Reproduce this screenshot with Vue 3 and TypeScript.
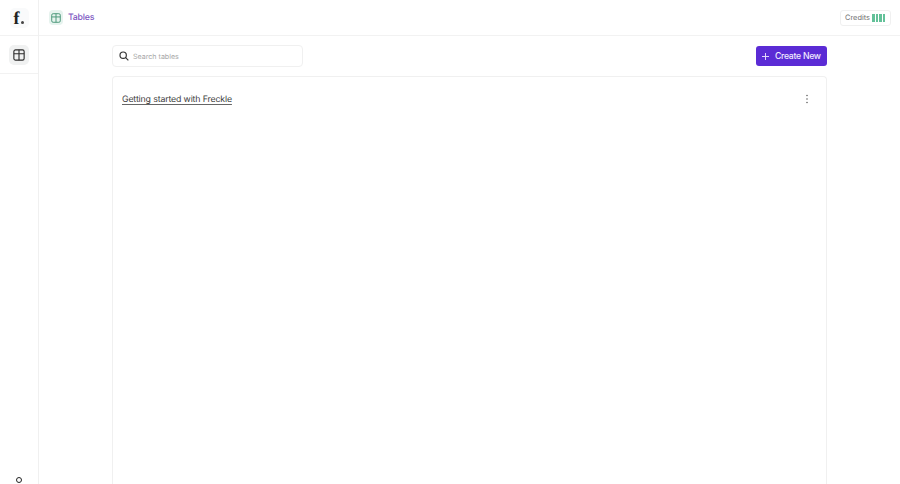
<script setup lang="ts">
const credits: number[] = [1, 2, 3, 4]
</script>

<template>
  <div class="app">
    <aside class="sidebar">
      <div class="brand"><div class="logo"><span class="f">f</span><span class="dot"></span></div></div>
      <nav class="nav">
        <div class="nav-btn">
          <svg width="12" height="12" viewBox="0 0 14 14" fill="none" stroke="#2b2b2b" stroke-width="1.3">
            <rect x="1" y="1" width="12" height="12" rx="2" />
            <path d="M1 5.5h12M7 1v12" />
          </svg>
        </div>
      </nav>
      <div class="foot"><span class="ring"></span></div>
    </aside>
    <div class="main">
      <header class="top">
        <div class="title">
          <div class="title-icon">
            <svg width="10" height="10" viewBox="0 0 14 14" fill="none" stroke="#4f9a7c" stroke-width="1.4">
              <rect x="1" y="1" width="12" height="12" rx="2" />
              <path d="M1 5.5h12M7 1v12" />
            </svg>
          </div>
          <span class="title-text">Tables</span>
        </div>
        <div class="credits">
          <span>Credits</span>
          <span class="bars"><i v-for="c in credits" :key="c"></i></span>
        </div>
      </header>
      <section class="content">
        <div class="tools">
          <label class="search">
            <svg width="10" height="10" viewBox="0 0 12 12" fill="none" stroke="#333" stroke-width="1.4">
              <circle cx="5" cy="5" r="3.8" />
              <path d="M8 8l3.2 3.2" />
            </svg>
            <span class="placeholder">Search tables</span>
          </label>
          <button class="create">
            <svg width="7" height="7" viewBox="0 0 8 8" stroke="#e6dcfa" stroke-width="1.1"><path d="M4 0v8M0 4h8" /></svg>
            <span>Create New</span>
          </button>
        </div>
        <div class="card">
          <div class="row">
            <a class="row-link">Getting started with Freckle</a>
            <svg class="more" width="4" height="10" viewBox="0 0 4 10" fill="#555">
              <circle cx="2" cy="1.4" r="0.75" /><circle cx="2" cy="5" r="0.75" /><circle cx="2" cy="8.6" r="0.75" />
            </svg>
          </div>
        </div>
      </section>
    </div>
  </div>
</template>

<style>
html, body { margin: 0; height: 100%; overflow: hidden; background: #fff; }
</style>

<style scoped>
.app { display: flex; width: 900px; height: 484px; overflow: hidden; font-family: Inter, "Liberation Sans", sans-serif; background: #fff; text-rendering: geometricPrecision; }
.sidebar { width: 38px; flex: none; border-right: 1px solid #f0f0f0; display: flex; flex-direction: column; }
.brand { height: 36px; display: flex; align-items: center; justify-content: center; box-sizing: border-box; border-bottom: 1px solid #f2f2f2; }
.logo { width: 19px; height: 20px; border-radius: 5px; background: #f9fafb; display: flex; align-items: flex-end; justify-content: center; }
.f { font-family: "Liberation Serif", serif; font-weight: 700; font-size: 18px; line-height: 20px; color: #222; margin-left: -1px; }
.dot { width: 3px; height: 3px; border-radius: 50%; background: #444; margin: 0 0 4px 1px; }
.nav { height: 38px; box-sizing: border-box; border-bottom: 1px solid #f2f2f2; display: flex; justify-content: center; padding-top: 9px; }
.nav-btn { width: 20px; height: 20px; border-radius: 5px; background: #f0f1f1; display: flex; align-items: center; justify-content: center; }
.foot { margin-top: auto; height: 7px; display: flex; justify-content: center; }
.ring { width: 6px; height: 6px; box-sizing: border-box; border: 1.5px solid #222; border-radius: 50%; }
.main { flex: 1; min-width: 0; display: flex; flex-direction: column; }
.top { height: 36px; flex: none; box-sizing: border-box; border-bottom: 1px solid #f2f2f2; display: flex; align-items: center; justify-content: space-between; padding: 0 9px 0 10px; }
.title { display: flex; align-items: center; gap: 5px; }
.title-icon { width: 14px; height: 15px; border-radius: 4px; background: #e6f3ee; display: flex; align-items: center; justify-content: center; }
.title-text { font-size: 8.8px; letter-spacing: -0.25px; font-weight: 500; color: #7e57c2; }
.credits { display: flex; align-items: center; gap: 2px; height: 14px; padding: 0 5px 0 4px; border: 1px solid #f0f0f0; border-radius: 3px; font-size: 7.4px; color: #707070; }
.bars { display: flex; gap: 1px; }
.bars i { width: 2.5px; height: 8px; background: #63c199; display: block; }
.content { flex: 1; min-height: 0; display: flex; flex-direction: column; gap: 9px; padding: 9px 73px 0 73px; }
.tools { display: flex; align-items: center; justify-content: space-between; }
.search { width: 191px; height: 22px; box-sizing: border-box; border: 1px solid #f0f0f0; border-radius: 4px; display: flex; align-items: center; gap: 4px; padding-left: 6px; }
.placeholder { font-size: 7.1px; color: #a8a8a8; }
.create { width: 71px; height: 20px; box-sizing: border-box; border: 0; border-radius: 3px; background: #5b2bd5; color: #f1ebff; display: flex; align-items: center; gap: 6px; padding: 0 0 0 6px; white-space: nowrap; font: 500 8.7px Inter, "Liberation Sans", sans-serif; letter-spacing: -0.3px; }
.card { flex: 1; border: 1px solid #f0f0f0; border-bottom: 0; border-radius: 4px 4px 0 0; }
.row { display: flex; align-items: center; justify-content: space-between; padding: 16px 17px 0 9px; height: 12px; }
.row-link { font-size: 8.8px; letter-spacing: -0.16px; color: #3d3d3d; text-decoration: underline; text-decoration-thickness: 0.5px; text-decoration-color: #666; text-underline-offset: 2px; }
.more { flex: none; }
</style>
